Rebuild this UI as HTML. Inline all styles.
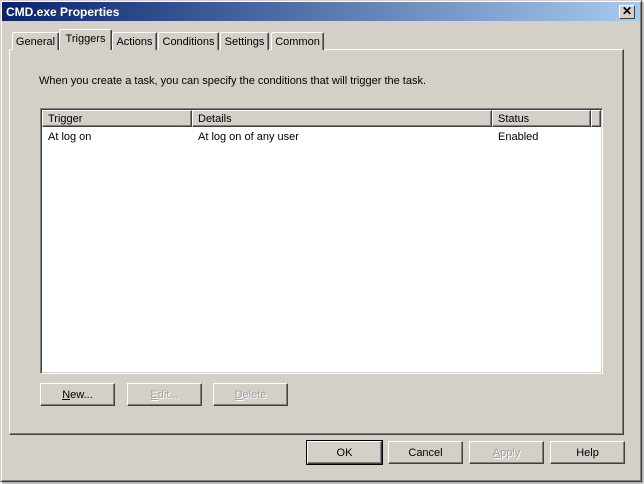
<!DOCTYPE html><html><head><style>
*{margin:0;padding:0;box-sizing:border-box}
body{width:644px;height:484px;background:#fff;font-family:"Liberation Sans",sans-serif;font-size:11px;color:#000;position:relative;overflow:hidden}
.a{position:absolute}
.win{left:0;top:0;width:642px;height:482px;background:#d4d0c8;border:1px solid;border-color:#d4d0c8 #404040 #404040 #d4d0c8;box-shadow:inset 1px 1px #fff,inset -1px -1px #808080,2px 2px 2px rgba(0,0,0,.35)}
.title{left:2px;top:2px;width:638px;height:19px;background:linear-gradient(90deg,#0a246a,#a6caf0);color:#fff;font-weight:bold;font-size:12px;line-height:20px;padding-left:4px}
.close{left:619px;top:5px;width:16px;height:14px;background:#d4d0c8;border:1px solid;border-color:#fff #404040 #404040 #fff;font-size:12px;font-weight:bold;text-align:center;line-height:11px;color:#000}
.tab{height:18px;top:32px;border:1px solid;border-color:#fff #404040 transparent #fff;border-bottom:none;box-shadow:inset -1px 0 #808080;text-align:center;line-height:18px;background:#d4d0c8;border-radius:2px 2px 0 0}
.panel{left:9px;top:49px;width:615px;height:386px;border:1px solid;border-color:#fff #404040 #404040 #fff;box-shadow:inset -1px -1px #808080}
.list{left:40px;top:108px;width:563px;height:266px;background:#fff;border:1px solid;border-color:#808080 #fff #fff #808080;box-shadow:inset 1px 1px #404040,inset -1px -1px #d4d0c8}
.hd{top:110px;height:17px;background:#d4d0c8;border:1px solid;border-color:#fff #404040 #404040 #fff;box-shadow:inset -1px -1px #808080;line-height:17px;padding-left:5px}
.btn{height:23px;width:75px;background:#d4d0c8;border:1px solid;border-color:#fff #404040 #404040 #fff;box-shadow:inset -1px -1px #808080;text-align:center;line-height:22px}
.dis{color:#a0a0a0;text-shadow:1px 1px #fff}
.def{outline:1px solid #000}
</style></head><body>
<div class="a win"></div>
<div class="a title">CMD.exe Properties</div>
<div class="a close">✕</div>
<div class="a panel"></div>
<div class="a tab" style="left:12px;width:47px">General</div>
<div class="a tab" style="left:112px;width:45px">Actions</div>
<div class="a tab" style="left:158px;width:61px">Conditions</div>
<div class="a tab" style="left:220px;width:49px">Settings</div>
<div class="a tab" style="left:271px;width:53px">Common</div>
<div class="a tab" style="left:59px;top:29px;height:21px;width:53px;line-height:19px;z-index:2;border-bottom:none">Triggers</div>
<div class="a" style="left:39px;top:75px">When you create a task, you can specify the conditions that will trigger the task.</div>
<div class="a list"></div>
<div class="a hd" style="left:42px;width:150px">Trigger</div>
<div class="a hd" style="left:192px;width:300px">Details</div>
<div class="a hd" style="left:492px;width:99px">Status</div>
<div class="a hd" style="left:591px;width:10px"></div>
<div class="a" style="left:48px;top:131px">At log on</div>
<div class="a" style="left:198px;top:131px">At log on of any user</div>
<div class="a" style="left:498px;top:131px">Enabled</div>
<div class="a btn" style="left:40px;top:383px"><u>N</u>ew...</div>
<div class="a btn dis" style="left:127px;top:383px"><u>E</u>dit...</div>
<div class="a btn dis" style="left:213px;top:383px"><u>D</u>elete</div>
<div class="a btn def" style="left:307px;top:441px">OK</div>
<div class="a btn" style="left:388px;top:441px">Cancel</div>
<div class="a btn dis" style="left:469px;top:441px"><u>A</u>pply</div>
<div class="a btn" style="left:550px;top:441px">Help</div>
</body></html>
